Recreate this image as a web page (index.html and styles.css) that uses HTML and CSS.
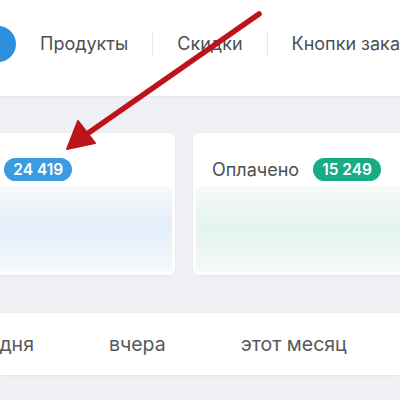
FILE: index.html
```html
<!DOCTYPE html>
<html lang="ru">

<head>
    <meta charset="UTF-8">
    <meta name="viewport" content="width=device-width, initial-scale=1.0">
    <title>Заказы</title>
    <link rel="stylesheet" href="styles.css">
</head>

<body>
    <div class="nav">
        <div class="logo"></div>
        <a href="#" class="nav-item">Продукты</a>
        <a href="#" class="nav-item">Скидки</a>
        <a href="#" class="nav-item">Кнопки заказа</a>
    </div>

    <div class="cards">
        <div class="card card-all">
            <div class="card-head">
                <span class="label">Заказы</span>
                <span class="badge badge-blue">24 419</span>
            </div>
            <div class="card-chart chart-blue"></div>
        </div>
        <div class="card">
            <div class="card-head">
                <span class="label">Оплачено</span>
                <span class="badge badge-green">15 249</span>
            </div>
            <div class="card-chart chart-green"></div>
        </div>
    </div>

    <div class="tabs">
        <a href="#" class="tab tab-first">сегодня</a>
        <a href="#" class="tab">вчера</a>
        <a href="#" class="tab">этот месяц</a>
    </div>

    <!-- стрелка-пометка поверх скриншота -->
    <svg class="arrow" width="400" height="400" viewBox="0 0 400 400">
        <line x1="259" y1="14" x2="84" y2="136" stroke="#bd141b" stroke-width="5.5" stroke-linecap="round" />
        <polygon points="67,149 78,121 95,143" fill="#bd141b" stroke="#bd141b" stroke-width="2" stroke-linejoin="round" />
    </svg>
</body>

</html>
```

FILE: styles.css
```css
body {
    margin: 0;
    width: 400px;
    height: 400px;
    overflow: hidden;
    background-color: #eef0f4;
    font-family: 'Inter', 'Roboto', sans-serif;
    color: #4d4f53;
    position: relative;
}

a {
    text-decoration: none;
    color: inherit;
}

.nav {
    height: 96px;
    box-sizing: border-box;
    padding-bottom: 8px;
    background-color: #ffffff;
    display: flex;
    align-items: center;
    white-space: nowrap;
    box-shadow: 0 1px 2px rgba(0, 0, 0, 0.04);
}

.logo {
    width: 36px;
    height: 36px;
    border-radius: 50%;
    background-color: #2f8fdf;
    margin-left: -20px;
    flex-shrink: 0;
}

.nav-item {
    font-size: 18px;
    padding: 0 24px;
    line-height: 26px;
    border-left: 1px solid #e4e6ea;
}

.nav-item:first-of-type {
    border-left: none;
}

.cards {
    display: flex;
    gap: 18px;
    margin-top: 37px;
    margin-left: -92px;
}

.card {
    width: 267px;
    height: 142px;
    flex-shrink: 0;
    background-color: #ffffff;
    border-radius: 6px;
    display: flex;
    flex-direction: column;
    box-shadow: 0 1px 3px rgba(0, 0, 0, 0.05);
}

.card-head {
    height: 53px;
    display: flex;
    align-items: flex-end;
    gap: 14px;
    padding: 0 19px 5px;
    box-sizing: border-box;
    font-size: 18px;
    line-height: 23px;
    white-space: nowrap;
}

.badge {
    color: #ffffff;
    font-size: 15.5px;
    font-weight: 600;
    line-height: 23px;
    padding: 0 9px;
    border-radius: 12px;
}

.badge-blue {
    background-color: #3b9be1;
}

.badge-green {
    background-color: #17ac86;
}

.card-chart {
    flex: 1;
    margin: 0 3px 3px;
    border-radius: 4px;
}

.chart-blue {
    background: linear-gradient(180deg, #f7f9fc 0%, #e4eef9 45%, #ecf3f9 75%, #f7f9fb 100%);
}

.chart-green {
    background: linear-gradient(180deg, #f6faf9 0%, #e4f4ed 45%, #ecf6f2 75%, #f7faf9 100%);
}

.tabs {
    margin-top: 38px;
    height: 62px;
    background-color: #ffffff;
    display: flex;
    align-items: center;
    gap: 75px;
    white-space: nowrap;
    box-shadow: 0 1px 3px rgba(0, 0, 0, 0.05);
}

.tab {
    font-size: 19.5px;
    color: #56585c;
}

.tab-first {
    margin-left: -43px;
}

.arrow {
    position: absolute;
    left: 0;
    top: 0;
    pointer-events: none;
}
```
